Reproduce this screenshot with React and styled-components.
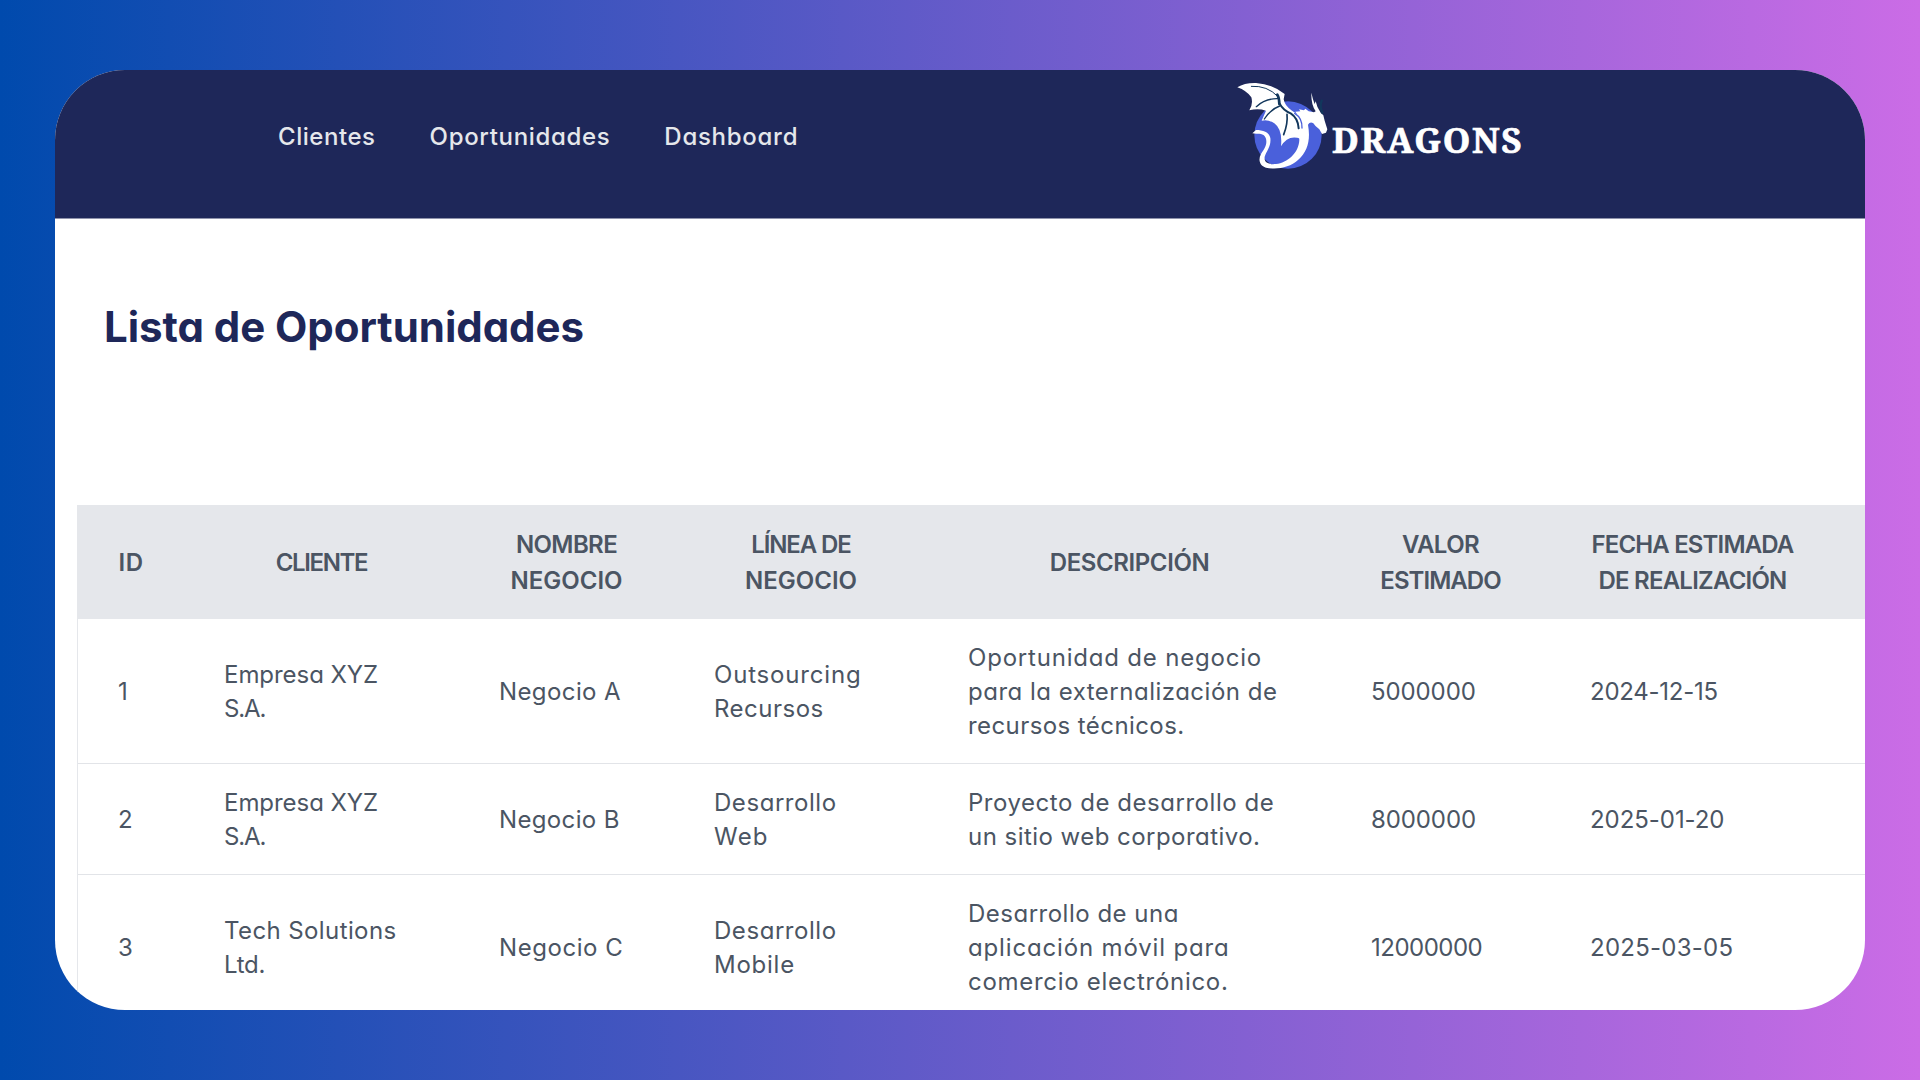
import React from "react";
import styled, { createGlobalStyle } from "styled-components";

const GlobalStyle = createGlobalStyle`
  * { box-sizing: border-box; }
  body {
    margin: 0;
    font-family: Inter, "Open Sans", sans-serif;
    font-feature-settings: "cv11";
  }
`;

const Backdrop = styled.div`
  width: 1920px;
  height: 1080px;
  padding: 70px 55px;
  overflow: hidden;
  background: linear-gradient(90deg, #004aad 0%, #cb6ce6 100%);
`;

const Card = styled.div`
  width: 1810px;
  height: 940px;
  border-radius: 70px;
  overflow: hidden;
  background: #fff;
`;

const Header = styled.header`
  height: 149px;
  display: flex;
  align-items: flex-start;
  justify-content: space-between;
  padding: 0 342px 0 223px;
  border-bottom: 1px solid #8f93ac;
  background: #1e2759;
`;

const Nav = styled.nav`
  display: flex;
  gap: 54px;
  padding-top: 49px;
`;

const NavLink = styled.a`
  font-size: 24px;
  line-height: 36px;
  font-weight: 450;
  letter-spacing: ${(p) => p.$spacing}px;
  color: #e5e7eb;
`;

const Logo = styled.div`
  display: flex;
  align-items: flex-start;
  padding-top: 6px;
`;

const LogoMark = styled.svg`
  width: 110px;
  height: 100px;
  flex: none;
`;

const LogoText = styled.span`
  margin: 40px 0 0 -8px;
  font-family: "Noto Serif", "Liberation Serif", serif;
  font-weight: 700;
  font-size: 35px;
  line-height: 48px;
  letter-spacing: 1.6px;
  color: #fff;
  -webkit-text-stroke: 0.7px #fff;
`;

const Main = styled.main`
  padding: 82px 0 0 22px;
`;

const Title = styled.h1`
  margin: 0 0 152px 27px;
  font-size: 42px;
  line-height: 52px;
  font-weight: 650;
  letter-spacing: -0.05px;
  color: #1e2759;
`;

const Table = styled.div`
  width: 1960px;
  border-left: 1px solid #e5e7eb;
`;

const Row = styled.div`
  display: grid;
  grid-template-columns: 106px 275px 215px 254px 403px 219px 285px 200px;
  align-items: center;
  padding: 22px 0 20px;
  border-bottom: 1px solid #e2e4e8;
`;

const HeadRow = styled(Row)`
  height: 114px;
  border-bottom: 0;
  background: #e5e7eb;
`;

const HeadCell = styled.div`
  display: flex;
  flex-direction: column;
  align-items: center;
  font-size: 24px;
  line-height: 36px;
  font-weight: 600;
  color: #4b5563;
`;

const Cell = styled.div`
  display: flex;
  flex-direction: column;
  align-items: flex-start;
  padding-left: 40px;
  font-size: 24px;
  line-height: 34px;
  color: #4b5563;
`;

const Line = styled.span`
  white-space: nowrap;
  letter-spacing: ${(p) => p.$spacing}px;
`;

const links = [
  ["Clientes", 0.55],
  ["Oportunidades", 0.67],
  ["Dashboard", 0.72],
];

const columns = [
  [["ID", 0.4]],
  [["CLIENTE", -1.35]],
  [["NOMBRE", -0.6], ["NEGOCIO", 0]],
  [["LÍNEA DE", -1.1], ["NEGOCIO", 0]],
  [["DESCRIPCIÓN", -0.4]],
  [["VALOR", -0.6], ["ESTIMADO", -0.95]],
  [["FECHA ESTIMADA", -0.85], ["DE REALIZACIÓN", -0.77]],
];

const rows = [
  [
    [["1", 0]],
    [["Empresa XYZ", -0.05], ["S.A.", -1.1]],
    [["Negocio A", 0.4]],
    [["Outsourcing", 0.82], ["Recursos", 0.5]],
    [["Oportunidad de negocio", 0.8], ["para la externalización de", 0.5], ["recursos técnicos.", 0.42]],
    [["5000000", -0.1]],
    [["2024-12-15", -0.25]],
  ],
  [
    [["2", 0]],
    [["Empresa XYZ", -0.05], ["S.A.", -1.1]],
    [["Negocio B", 0.35]],
    [["Desarrollo", 0.55], ["Web", 1.2]],
    [["Proyecto de desarrollo de", 0.54], ["un sitio web corporativo.", 0.46]],
    [["8000000", -0.1]],
    [["2025-01-20", -0.05]],
  ],
  [
    [["3", 0]],
    [["Tech Solutions", 0.4], ["Ltd.", -0.3]],
    [["Negocio C", 0.55]],
    [["Desarrollo", 0.55], ["Mobile", 0.75]],
    [["Desarrollo de una", 0.5], ["aplicación móvil para", 0.85], ["comercio electrónico.", 0.7]],
    [["12000000", -0.5]],
    [["2025-03-05", 0.25]],
  ],
];

function Lines({ items }) {
  return items.map(([text, spacing]) => (
    <Line key={text} $spacing={spacing}>
      {text}
    </Line>
  ));
}

function Dragon() {
  return (
    <LogoMark viewBox="0 0 330 300" aria-hidden="true">
      <circle cx="174" cy="177" r="101" fill="#4a60db" />
      {/* neck, body and tail */}
      <path
        fill="#fff"
        d="M196 107 L211 106 L207 100 L222 103 L226 98 L236 106 L252 109 L257 106 Q243 86 244 50 Q249 72 254 84 L257 76 Q261 96 272 110 L280 118 L284 134 L292 160 L288 170 L276 174 L268 160 Q256 152 250 142 Q240 136 234 146 C242 190 234 226 204 252 C180 274 142 282 108 275 C88 268 84 250 93 234 C104 216 112 206 108 188 C104 174 92 173 79 173 L67 172 L78 162 C98 162 118 168 121 186 C124 210 110 224 104 242 C101 262 118 266 138 264 C172 260 206 232 208 192 L204 150 Q210 124 196 107 Z"
      />
      {/* wing */}
      <path
        fill="#fff"
        d="M22 34 Q44 20 78 21 Q126 24 164 54 L161 70 Q164 90 186 104 Q214 118 217 150 L212 188 Q174 174 153 211 Q158 160 133 142 Q116 130 95 134 L108 104 Q84 96 58 103 Q70 84 64 64 Q50 44 22 34 Z"
      />
      <path
        fill="none"
        stroke="#4a60db"
        strokeWidth="4"
        strokeLinecap="round"
        d="M194 112 Q217 126 216 156"
      />
      <g fill="none" stroke="#12375c" strokeLinecap="round">
        <path strokeWidth="3" d="M64 31 Q112 28 143 61" />
        <path strokeWidth="8" d="M142 56 Q148 66 148 84" />
        <path strokeWidth="4" d="M146 68 Q106 66 79 92" />
        <path strokeWidth="4" d="M149 90 Q122 100 103 129" />
        <path strokeWidth="6" d="M148 82 Q160 104 182 112 Q204 126 206 157" />
        <path strokeWidth="5" d="M171 115 Q174 142 161 176" />
        <path strokeWidth="7" d="M275 74 Q268 92 277 110" />
      </g>
    </LogoMark>
  );
}

export default function App() {
  return (
    <>
      <GlobalStyle />
      <Backdrop>
        <Card>
          <Header>
            <Nav>
              {links.map(([label, spacing]) => (
                <NavLink key={label} $spacing={spacing}>
                  {label}
                </NavLink>
              ))}
            </Nav>
            <Logo>
              <Dragon />
              <LogoText>DRAGONS</LogoText>
            </Logo>
          </Header>
          <Main>
            <Title>Lista de Oportunidades</Title>
            <Table>
              <HeadRow>
                {columns.map((lines, i) => (
                  <HeadCell key={i}>
                    <Lines items={lines} />
                  </HeadCell>
                ))}
              </HeadRow>
              {rows.map((cells, r) => (
                <Row key={r}>
                  {cells.map((lines, i) => (
                    <Cell key={i}>
                      <Lines items={lines} />
                    </Cell>
                  ))}
                </Row>
              ))}
            </Table>
          </Main>
        </Card>
      </Backdrop>
    </>
  );
}
